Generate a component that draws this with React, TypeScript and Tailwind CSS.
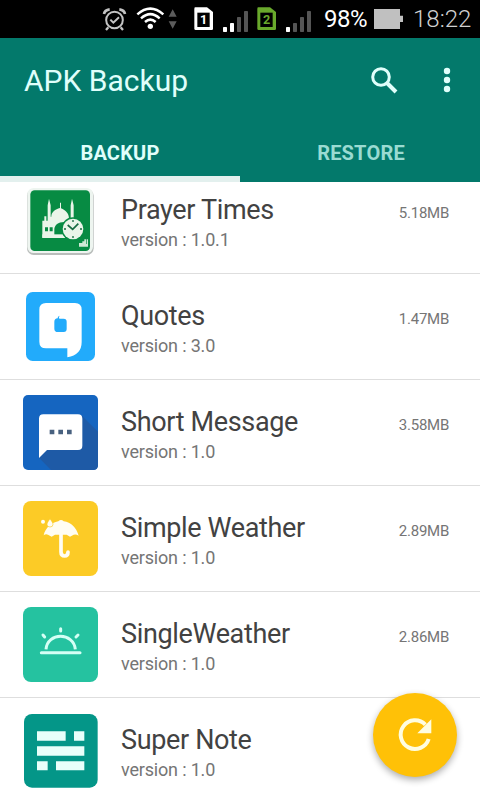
import React, { useState } from "react";

const AlarmIcon = () => (
  <svg width="25" height="38" viewBox="36 0 75 114" fill="none" stroke="#c4c4c4" strokeWidth="6">
    <circle cx="73.500" cy="60" r="25" />
    <path d="M61 59l9 9 17-16" />
    <path d="M55 82l-7 8M92 82l7 8" strokeWidth="7" />
    <path d="M42 42q2-12 17-14M105 42q-2-12-17-14" strokeWidth="8" />
  </svg>
);

const WifiIcon = () => (
  <svg width="44" height="38" viewBox="135 0 132 114" fill="none">
    <g stroke="#fff" strokeWidth="7.500">
      <path d="M142 43q39-34 78 0" />
      <path d="M153 55q28-25 56 0" />
      <path d="M165 66q16-14 32 0" />
    </g>
    <circle cx="181" cy="79" r="8" fill="#fff" />
    <path d="M236 50l12-22 12 22zM236 64h24l-12 22z" fill="#5c5c5c" />
  </svg>
);

const SimIcon = ({ slot, color }: { slot: number; color: string }) => (
  <svg width="21" height="38" viewBox="309 0 63 114">
    <path d="M316 22h35l18 14v50q0 4-4 4h-48q-4 0-4-4V26q0-4 3-4z" fill={color} />
    <path d="M322 38h37v43h-37z" fill="#000" />
    <text x="341" y="73" textAnchor="middle" fontSize="38" fontWeight="700" fontFamily="Roboto, sans-serif" fill={color}>
      {slot}
    </text>
  </svg>
);

const SignalIcon = ({ level }: { level: number }) => (
  <svg width="27" height="38" viewBox="396 0 81 114">
    <rect x="399" y="81" width="12" height="15" rx="2" fill="#fff" />
    <rect x="420" y="69" width="12" height="27" rx="2" fill={level > 1 ? "#fff" : "#555"} />
    <rect x="441" y="51" width="12" height="45" rx="2" fill="#555" />
    <rect x="462" y="33" width="12" height="63" rx="2" fill="#555" />
  </svg>
);

const BatteryIcon = () => (
  <svg width="29" height="38" viewBox="282 0 87 114">
    <path d="M282 27h78v20h9v19h-9v21h-78z" fill="#c0c0c0" />
  </svg>
);

const PrayerIcon = () => (
  <svg width="75" height="75" viewBox="39 9 225 225">
    <rect x="51" y="27" width="200" height="198" rx="20" fill="#b9bdbb" />
    <rect x="52" y="24" width="197" height="195" rx="19" fill="#eef5f0" />
    <rect x="61" y="31" width="179" height="182" rx="13" fill="#078b43" />
    <g fill="#eaf5e9">
      <path d="M113 130V76l4-20 5 20v54zM182 115V76l4-20 5 20v39z" />
      <path d="M150 68h3v17c14 6 24 15 24 31l-14 10c-20 0-28 10-30 20v27H97v-51h6v-13h6v13h5v-12h10c0-14 12-22 26-26z" />
      <path d="M97 163h68v11H97z" />
    </g>
    <path d="M105 142h9v12h-9zM119 142h9v12h-9z" fill="#078b43" />
    <circle cx="189" cy="147" r="35" fill="#078b43" />
    <circle cx="189" cy="147" r="31" fill="#eaf5e9" />
    <path d="M173 135l15 13 17-17" fill="none" stroke="#176b42" strokeWidth="5" />
    <path d="M189 120v6M189 168v6M162 147h6M210 147h6" stroke="#176b42" strokeWidth="4" />
    <path d="M207 200v-11h10v-5h6v-6h5v14h2v-14h4v22z" fill="#cfe9d5" />
  </svg>
);

const QuotesIcon = () => (
  <svg width="75" height="75" viewBox="39 27 225 225">
    <rect x="48" y="36" width="207" height="207" rx="20" fill="#22abfb" />
    <path d="M108 69h87q20 0 20 20v97q0 39-43 46v-27h-64q-20 0-20-20V89q0-20 20-20z" fill="#fff" />
    <path d="M143 115q-1-6 6-8-4 4-1 9h13q9 0 9 9v22q0 9-9 9h-17q-11 0-11-10v-21q0-9 10-10z" fill="#22abfb" />
  </svg>
);

const MessageIcon = () => (
  <svg width="75" height="75" viewBox="39 30 225 225">
    <rect x="39" y="30" width="225" height="225" rx="15" fill="#1565c0" />
    <path d="M214 91l50 49v101q0 14-14 14H123l-36-37z" fill="#1e5aa6" />
    <path d="M100 88h104q13 0 13 13v81q0 13-13 13h-93l-24 24V101q0-13 13-13z" fill="#fff" />
    <path d="M119 134h14v14h-14zM145 134h14v14h-14zM171 134h14v14h-14z" fill="#48617f" />
  </svg>
);

const UmbrellaIcon = () => (
  <svg width="75" height="75" viewBox="39 33 225 225">
    <rect x="39" y="33" width="225" height="225" rx="24" fill="#fccb26" />
    <g fill="#fffdf2">
      <path d="M101 136c5-22 22-38 44-42q8-8 16 0c22 3 38 19 45 43q-7-5-15-3l-11 6-10-6h-35l-10 6-11-6q-7-3-13 2z" />
      <path d="M120 86c5 8 9 12 9 17a9 8 0 0 1-18 0c0-5 4-9 9-17z" stroke="#fccb26" strokeWidth="2" />
      <circle cx="99" cy="95" r="6" />
    </g>
    <path d="M153 130v56q0 12 11 12 10 0 10-12" fill="none" stroke="#fffdf2" strokeWidth="11" strokeLinecap="round" />
  </svg>
);

const SunriseIcon = () => (
  <svg width="75" height="75" viewBox="39 21 225 225">
    <rect x="39" y="21" width="225" height="225" rx="24" fill="#25c2a0" />
    <g fill="none" stroke="#d5fff5" strokeWidth="9">
      <path d="M108 148c4-52 83-52 88 0" />
      <path d="M94 158h116" strokeLinecap="round" />
      <path d="M152 86v7M99 105l5 6M204 105l-6 6" strokeLinecap="round" />
    </g>
  </svg>
);

const NoteIcon = () => (
  <svg width="75" height="75" viewBox="39 24 225 225">
    <rect x="42" y="27" width="221" height="221" rx="24" fill="#049688" />
    <path
      d="M81 79h86v28H81zM192 79h31v28h-31zM81 124h142v28H81zM81 169h32v27H81zM138 169h85v27h-85z"
      fill="#e8fffa"
    />
  </svg>
);

const apps = [
  { name: "Prayer Times", version: "1.0.1", size: "5.18MB", icon: <PrayerIcon /> },
  { name: "Quotes", version: "3.0", size: "1.47MB", icon: <QuotesIcon /> },
  { name: "Short Message", version: "1.0", size: "3.58MB", icon: <MessageIcon /> },
  { name: "Simple Weather", version: "1.0", size: "2.89MB", icon: <UmbrellaIcon /> },
  { name: "SingleWeather", version: "1.0", size: "2.86MB", icon: <SunriseIcon /> },
  { name: "Super Note", version: "1.0", size: "", icon: <NoteIcon /> },
];

const tabs = ["BACKUP", "RESTORE"];

export default function App() {
  const [activeTab, setActiveTab] = useState("BACKUP");

  return (
    <main className="relative flex h-[800px] w-[480px] flex-col overflow-hidden bg-white font-[Roboto,sans-serif]">
      <div className="flex h-[38px] shrink-0 items-center bg-black pl-[102px] text-[24px] leading-[38px]">
        <AlarmIcon />
        <div className="ml-2">
          <WifiIcon />
        </div>
        <div className="ml-[14px] flex gap-2">
          <SimIcon slot={1} color="#ffffff" />
          <SignalIcon level={2} />
        </div>
        <div className="ml-[7px] flex gap-2">
          <SimIcon slot={2} color="#69a92c" />
          <SignalIcon level={1} />
        </div>
        <span className="ml-3 w-[45px] tracking-[-0.5px] text-white">98%</span>
        <div className="ml-[5px]">
          <BatteryIcon />
        </div>
        <span className="ml-[10px] font-light text-[#d0d0d0]">18:22</span>
      </div>

      <header className="flex h-[144px] shrink-0 flex-col bg-[#03796b] text-[#e0fffb]">
        <div className="flex h-[84px] items-center pl-6">
          <h1 className="flex-grow text-[30px]">APK Backup</h1>
          <button className="mr-[45px]" aria-label="Search">
            <svg width="28" height="28" viewBox="0 0 28 28" fill="none" stroke="currentColor">
              <circle cx="11" cy="11" r="8.300" strokeWidth="3" />
              <path d="M17 17l9 9" strokeWidth="4" />
            </svg>
          </button>
          <button className="mr-[29px]" aria-label="More">
            <svg width="8" height="26" viewBox="0 0 8 26" fill="currentColor">
              <circle cx="4" cy="4" r="3.200" />
              <circle cx="4" cy="13" r="3.200" />
              <circle cx="4" cy="22" r="3.200" />
            </svg>
          </button>
        </div>
        <div className="grid flex-grow grid-cols-2">
          {tabs.map((tab) => (
            <button
              key={tab}
              onClick={() => setActiveTab(tab)}
              className={`border-b-[6px] pt-2 text-[20px] leading-[46px] font-bold tracking-[0.2px] ${
                activeTab === tab ? "border-[#e3f0ee]" : "border-transparent pl-[2px] text-[#9adbd2]"
              }`}
            >
              {tab}
            </button>
          ))}
        </div>
      </header>

      <div className="min-h-0 flex-grow overflow-hidden">
        <ul className="-mt-[14px]">
          {apps.map((app) => (
            <li key={app.name} className="flex h-[106px] border-b border-[#dedede] pt-[15px] pr-[31px] pl-[23px]">
              {app.icon}
              <div className="ml-[23px] flex-grow pt-[11px]">
                <div className="text-[27px] leading-[33px] tracking-[-0.35px] text-[#424242]">{app.name}</div>
                <div className="text-[18px] leading-[26px] tracking-[-0.18px] text-[#757575]">version : {app.version}</div>
              </div>
              <span className="pt-5 text-[15px] leading-5 tracking-[-0.25px] text-[#757575]">{app.size}</span>
            </li>
          ))}
        </ul>
      </div>

      <button
        className="absolute top-[693px] left-[373px] flex h-[84px] w-[84px] items-center justify-center rounded-full bg-[#ffc107] shadow-[0_3px_7px_rgba(0,0,0,0.32)]"
        aria-label="Refresh"
      >
        <svg width="84" height="84" viewBox="39 24 252 252">
          <path d="M196 119A43 43 0 1 0 206 162" fill="none" stroke="#fffde0" strokeWidth="12" />
          <path d="M214 103v42h-42z" fill="#fffde0" />
        </svg>
      </button>
    </main>
  );
}
